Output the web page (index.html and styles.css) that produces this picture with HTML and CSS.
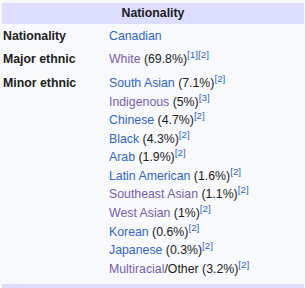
FILE: index.html
```html
<!DOCTYPE html>
<html lang="en">
<head>
<meta charset="utf-8">
<title>Nationality</title>
<link rel="stylesheet" href="styles.css">
</head>
<body>
<div class="infobox">
  <div class="header">Nationality</div>
  <div class="rows">
    <div class="row">
      <div class="label">Nationality</div>
      <div class="value"><a href="#">Canadian</a></div>
    </div>
    <div class="row">
      <div class="label">Major ethnic</div>
      <div class="value"><a class="visited" href="#">White</a> (69.8%)<sup class="ref"><a href="#">[1]</a><a href="#">[2]</a></sup></div>
    </div>
    <div class="row">
      <div class="label">Minor ethnic</div>
      <div class="value list">
        <div><a href="#">South Asian</a> (7.1%)<sup class="ref"><a href="#">[2]</a></sup></div>
        <div><a class="visited" href="#">Indigenous</a> (5%)<sup class="ref"><a href="#">[3]</a></sup></div>
        <div><a href="#">Chinese</a> (4.7%)<sup class="ref"><a href="#">[2]</a></sup></div>
        <div><a href="#">Black</a> (4.3%)<sup class="ref"><a href="#">[2]</a></sup></div>
        <div><a href="#">Arab</a> (1.9%)<sup class="ref"><a href="#">[2]</a></sup></div>
        <div><a href="#">Latin American</a> (1.6%)<sup class="ref"><a href="#">[2]</a></sup></div>
        <div><a class="visited" href="#">Southeast Asian</a> (1.1%)<sup class="ref"><a href="#">[2]</a></sup></div>
        <div><a class="visited" href="#">West Asian</a> (1%)<sup class="ref"><a href="#">[2]</a></sup></div>
        <div><a href="#">Korean</a> (0.6%)<sup class="ref"><a href="#">[2]</a></sup></div>
        <div><a href="#">Japanese</a> (0.3%)<sup class="ref"><a href="#">[2]</a></sup></div>
        <div><a class="visited" href="#">Multiracial</a>/Other (3.2%)<sup class="ref"><a href="#">[2]</a></sup></div>
      </div>
    </div>
  </div>
  <div class="footer"></div>
</div>
</body>
</html>
```

FILE: styles.css
```css
html, body {
  margin: 0;
  padding: 0;
  background: #f8f9fa;
}

body {
  font-family: "Liberation Sans", Arial, sans-serif;
  font-size: 12.32px;
  line-height: 1.5;
  color: #202122;
}

.infobox {
  display: flex;
  flex-direction: column;
  padding: 3px 1px 0 2px;
}

.header {
  background: #ddddff;
  font-weight: bold;
  text-align: center;
  padding: 1.26px 0;
}

.rows {
  display: flex;
  flex-direction: column;
  gap: 5px;
  padding: 3px 0 0 1px;
}

.row {
  display: grid;
  grid-template-columns: 106px 1fr;
}

.label {
  font-weight: bold;
}

.list {
  display: flex;
  flex-direction: column;
}

a {
  color: #3366cc;
  text-decoration: none;
}

a.visited {
  color: #795cb2;
}

.ref {
  font-size: 80%;
  line-height: 1;
  vertical-align: super;
  white-space: nowrap;
}

.footer {
  background: #ddddff;
  height: 6px;
  margin-top: 6px;
}
```
